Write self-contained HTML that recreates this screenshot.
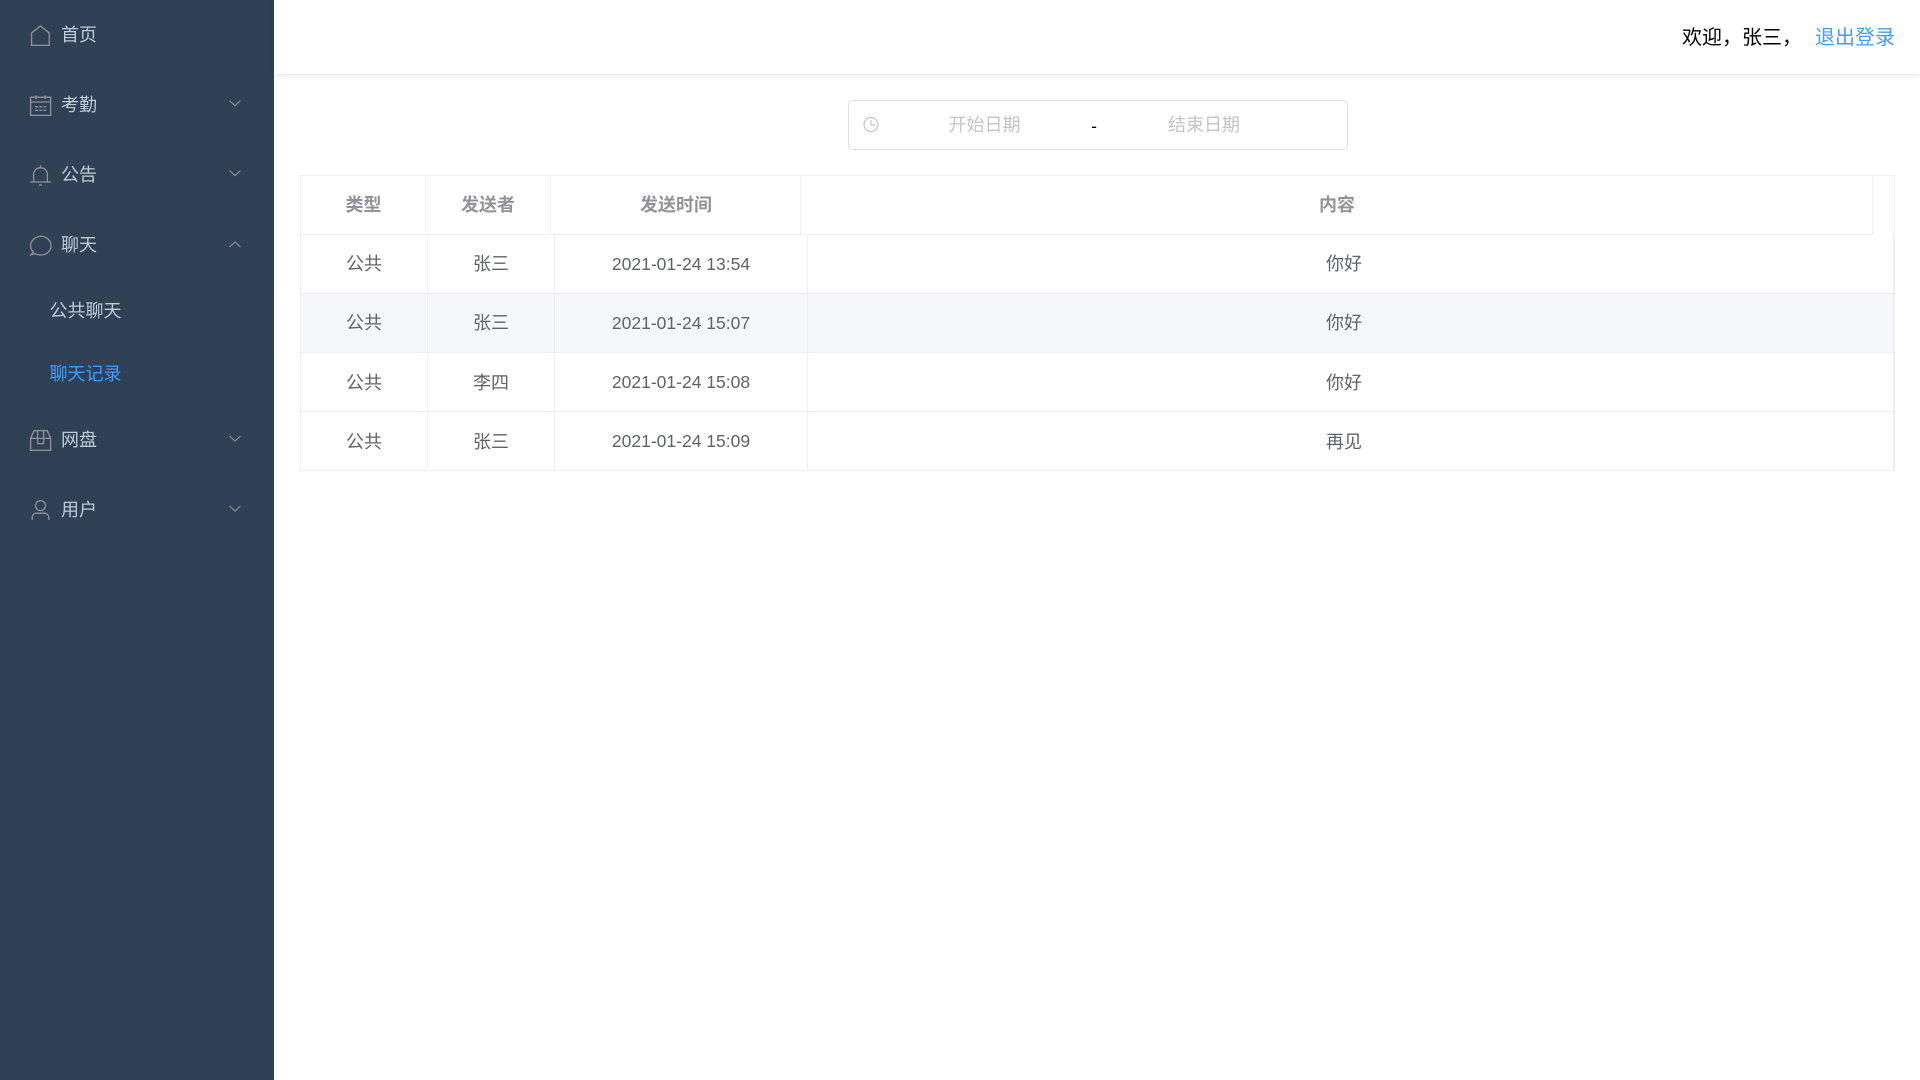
<!DOCTYPE html>
<html lang="zh-CN">
<head>
<meta charset="utf-8">
<title>聊天记录</title>
<style>
html,body{margin:0;padding:0;width:1920px;height:1080px;overflow:hidden;background:#fff;font-family:"Liberation Sans","Noto Sans CJK SC",sans-serif}
*{box-sizing:border-box}
.side{position:absolute;left:0;top:0;width:274px;height:1080px;background:#304156}
.side svg{position:absolute;left:0;top:0}
.m{position:absolute;line-height:24px;height:24px;font-size:18px;color:#bfcbd9;white-space:nowrap}
.top{position:absolute;left:274px;top:0;width:1646px;height:74px;background:#fff;box-shadow:0 1px 5px rgba(0,21,41,.12)}
.t{position:absolute;top:26px;line-height:24px;font-size:20px;white-space:nowrap;color:#000}
.date{position:absolute;left:848px;top:100px;width:500px;height:50px;border:1px solid #dcdfe6;border-radius:5px;background:#fff}
.date span{position:absolute;top:12px;line-height:24px;font-size:18px;color:#c0c4cc;white-space:nowrap;width:80px;text-align:center}
.date svg{position:absolute;left:0;top:0}
.tb{position:absolute;left:300px;top:175px;width:1595px;height:296px;border:1px solid #ebeef5}
table{border-collapse:separate;border-spacing:0;table-layout:fixed;position:absolute;left:0}
td,th{padding:0 0 2px;text-align:center;border-right:1px solid #ebeef5;border-bottom:1px solid #ebeef5;font-size:18px;height:59px;font-family:"Liberation Sans","Noto Sans CJK SC",sans-serif}
th{color:#909399;font-weight:700}
th.a{padding-left:1px}
td{color:#606266}
td.c{padding-right:13px}
tr.s td{background:#f5f7fa}
tr.r td{padding-bottom:1px}
tr td.d{font-size:17.5px;padding-bottom:0}
tr:last-child td{border-bottom:0;height:58px}
</style>
</head>
<body>
<div class="side">
<svg width="274" height="1080" fill="none" stroke="#909399" stroke-width="1.3">
<path d="M31.6 45.4V33L40.4 26L49.2 33V45.4Z"/>
<path d="M30.6 97.2H50.6V115.4H30.6ZM30.6 102H50.6M36 95.4V99M45.2 95.4V99M35 106.8H38M39.2 106.8H42.2M43.4 106.8H46.4M35 110.4H38M39.2 110.4H42.2M43.4 110.4H46.4"/>
<path d="M33.6 182V174.5C33.6 170.6 36.6 167.8 40.5 167.8S47.4 170.6 47.4 174.5V182M30.2 182H50.8M40.5 165.4V167.8M39 185H42"/>
<path d="M33.5 252C31.6 250.3 30.6 248.2 30.6 245.8C30.6 240.6 35.2 236.4 40.9 236.4S51 240.6 51 245.8S46.6 255 40.9 255C38.9 255 37.2 254.6 35.6 253.8L31 254.8Z"/>
<path d="M30.6 438.4L34 430.6H47.2L50.6 438.4V450.4H30.6ZM30.6 438.4H50.6M37.6 431V443.6H43.6V431"/>
<circle cx="40.5" cy="505.6" r="5"/>
<path d="M32.2 520V517.4C32.2 515 34 513.2 36.4 513.2H44.6C47 513.2 48.8 515 48.8 517.4V520"/>
<g stroke-width="1.1">
<path d="M229.6 100.6L235 105.6L240.4 100.6"/>
<path d="M229.6 170.6L235 175.6L240.4 170.6"/>
<path d="M229.6 247L235 242L240.4 247"/>
<path d="M229.6 436L235 441L240.4 436"/>
<path d="M229.6 506L235 511L240.4 506"/>
</g>
</svg>
<div class="m" style="left:61px;top:23px">首页</div>
<div class="m" style="left:61px;top:93px">考勤</div>
<div class="m" style="left:61px;top:163px">公告</div>
<div class="m" style="left:61px;top:233px">聊天</div>
<div class="m" style="left:49.5px;top:299px">公共聊天</div>
<div class="m" style="left:49.5px;top:362px;color:#409eff">聊天记录</div>
<div class="m" style="left:61px;top:427.5px">网盘</div>
<div class="m" style="left:61px;top:498px">用户</div>
</div>
<div class="top"></div>
<div class="t" style="left:1682px">欢迎，张三，</div>
<div class="t" style="left:1815px;color:#409eff">退出登录</div>
<div class="date">
<svg width="60" height="48" fill="none" stroke="#c0c4cc" stroke-width="1.2"><circle cx="22" cy="23.5" r="7"/><path d="M22 19V24H26.5"/></svg>
<span style="left:95.5px">开始日期</span>
<span style="left:315px">结束日期</span>
<span style="left:241px;width:8px;color:#000;font-size:17.5px;top:13px">-</span>
</div>
<div class="tb">
<table style="top:0;width:1572px">
<colgroup><col style="width:125px"><col style="width:125px"><col style="width:250px"><col style="width:1072px"></colgroup>
<tr><th class="a">类型</th><th>发送者</th><th class="a">发送时间</th><th class="a">内容</th></tr>
</table>
<table style="top:59px;width:1593px">
<colgroup><col style="width:127px"><col style="width:127px"><col style="width:253px"><col style="width:1086px"></colgroup>
<tr><td>公共</td><td>张三</td><td class="d">2021-01-24 13:54</td><td class="c">你好</td></tr>
<tr class="s"><td>公共</td><td>张三</td><td class="d">2021-01-24 15:07</td><td class="c">你好</td></tr>
<tr class="r"><td>公共</td><td>李四</td><td class="d">2021-01-24 15:08</td><td class="c">你好</td></tr>
<tr class="r"><td>公共</td><td>张三</td><td class="d">2021-01-24 15:09</td><td class="c">再见</td></tr>
</table>
</div>
</body>
</html>
